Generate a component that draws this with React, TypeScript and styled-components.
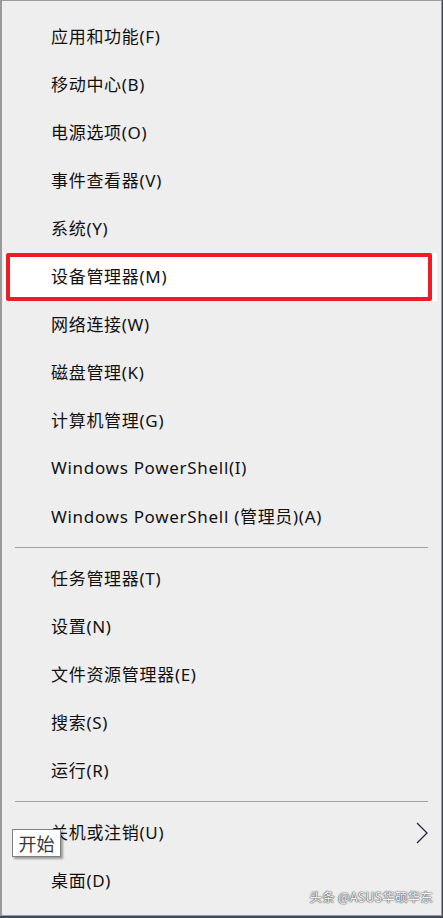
import React from "react";
import styled, { createGlobalStyle } from "styled-components";

const Global = createGlobalStyle`
  html, body { margin: 0; padding: 0; }
  body {
    width: 443px;
    height: 918px;
    overflow: hidden;
    background: #3c4a5a;
    font-family: "Noto Sans", "Noto Sans CJK SC", sans-serif;
  }
`;

const Menu = styled.div`
  position: relative;
  box-sizing: border-box;
  width: 442px;
  height: 916px;
  background: #eeeeee;
  border: 1px solid #9a9a9a;
  border-left-width: 2px;
  padding-top: 12px;
  display: flex;
  flex-direction: column;
`;

const Item = styled.div<{ $hover?: boolean }>`
  position: relative;
  box-sizing: border-box;
  height: 48px;
  padding-bottom: 3px;
  flex-shrink: 0;
  display: flex;
  align-items: center;
  font-size: 17px;
  letter-spacing: 0.7px;
  color: #111;
  background: ${(p) => (p.$hover ? "#ffffff" : "transparent")};
  margin-left: ${(p) => (p.$hover ? "2px" : "-2px")};
  padding-left: ${(p) => (p.$hover ? "47px" : "51px")};
  margin-right: ${(p) => (p.$hover ? "4px" : "0")};
`;

const Label = styled.span`
  white-space: pre;
`;

const RedBox = styled.div`
  position: absolute;
  left: 2px;
  top: 0px;
  width: 426px;
  height: 48px;
  box-sizing: border-box;
  border: 4px solid #ee1c25;
  border-radius: 2px;
  pointer-events: none;
`;

const Separator = styled.div`
  height: 14px;
  flex-shrink: 0;
  display: flex;
  align-items: flex-start;
  padding: 6px 13px 0 13px;
  box-sizing: border-box;
  &::before {
    content: "";
    display: block;
    width: 100%;
    height: 1px;
    background: #a0a0a0;
  }
`;

const Chevron = styled.svg`
  position: absolute;
  right: 13px;
  top: 13px;
`;

const Tooltip = styled.div`
  position: absolute;
  left: 12px;
  top: 20px;
  height: 28px;
  box-sizing: border-box;
  width: 49px;
  display: flex;
  align-items: center;
  justify-content: center;
  background: #ffffff;
  border: 1px solid #808080;
  box-shadow: 2px 2px 2px rgba(0, 0, 0, 0.35);
  font-family: "Noto Sans CJK SC", sans-serif;
  font-size: 18px;
  letter-spacing: 0;
  color: #3a3a3a;
  z-index: 2;
`;

const Watermark = styled.div`
  position: absolute;
  right: 8px;
  bottom: 9px;
  font-family: "Noto Sans CJK SC", sans-serif;
  font-size: 12.5px;
  color: #f4f4f4;
  text-shadow: 0 0 1px #555, 0 0 1px #555, 0 0 2px #777;
  letter-spacing: 0.2px;
`;

const group1 = [
  "应用和功能(F)",
  "移动中心(B)",
  "电源选项(O)",
  "事件查看器(V)",
  "系统(Y)",
  "设备管理器(M)",
  "网络连接(W)",
  "磁盘管理(K)",
  "计算机管理(G)",
  "Windows PowerShell(I)",
  "Windows PowerShell (管理员)(A)",
];
const group2 = ["任务管理器(T)", "设置(N)", "文件资源管理器(E)", "搜索(S)", "运行(R)"];

export default function App() {
  return (
    <>
      <Global />
      <Menu>
        {group1.map((t) => {
          const hover = t === "设备管理器(M)";
          return (
            <Item key={t} $hover={hover}>
              <Label>{t}</Label>
              {hover && <RedBox />}
            </Item>
          );
        })}
        <Separator />
        {group2.map((t) => (
          <Item key={t}>
            <Label>{t}</Label>
          </Item>
        ))}
        <Separator />
        <Item>
          <Label>关机或注销(U)</Label>
          <Chevron width="12" height="22" viewBox="0 0 12 22">
            <path d="M1 1 L11 11 L1 21" fill="none" stroke="#1a2a40" strokeWidth="1.3" />
          </Chevron>
          <Tooltip>开始</Tooltip>
        </Item>
        <Item>
          <Label>桌面(D)</Label>
        </Item>
        <Watermark>头条 @ASUS华硕华东</Watermark>
      </Menu>
    </>
  );
}
